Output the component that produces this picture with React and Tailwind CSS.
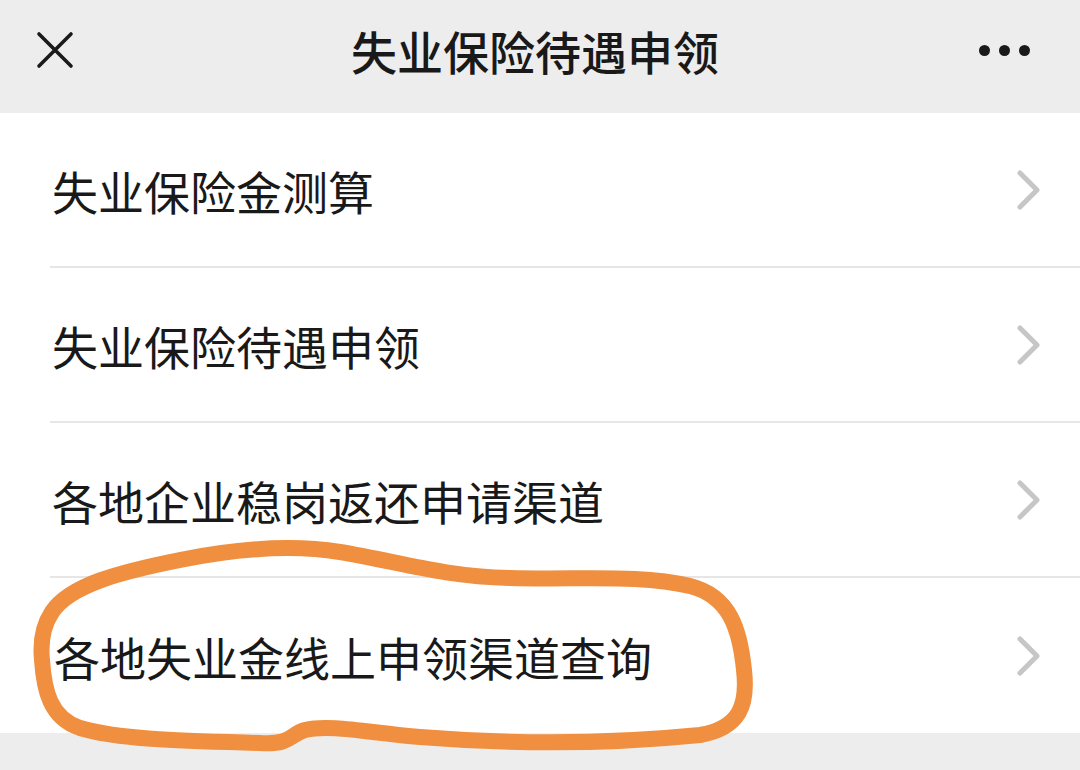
import React from 'react'

const items = [
  '失业保险金测算',
  '失业保险待遇申领',
  '各地企业稳岗返还申请渠道',
  '各地失业金线上申领渠道查询',
]

function Chevron() {
  return (
    <svg width="26" height="40" viewBox="0 0 26 40" fill="none" stroke="#c6c6c6" strokeWidth="5" strokeLinecap="round" strokeLinejoin="round">
      <path d="M4 3 L21 20 L4 37" />
    </svg>
  )
}

export default function App() {
  return (
    <div
      className="relative w-[1080px] h-[770px] overflow-hidden bg-[#ededed] text-[#191919]"
      style={{ fontFamily: '"Noto Sans CJK SC", "Noto Sans", sans-serif' }}
    >
      {/* Top bar */}
      <div className="h-[113px] pb-[13px] flex items-center px-[36px]">
        <div className="w-[120px]">
          <svg width="38" height="38" viewBox="0 0 38 38" stroke="#1a1a1a" strokeWidth="3.6" strokeLinecap="round">
            <path d="M3 3 L35 35 M35 3 L3 35" />
          </svg>
        </div>
        <div className="flex-1 text-center pr-[10px] text-[46px] leading-none font-medium">失业保险待遇申领</div>
        <div className="w-[120px] flex justify-end gap-[9px] pr-[14px]">
          <span className="w-[11px] h-[11px] rounded-full bg-[#1a1a1a]" />
          <span className="w-[11px] h-[11px] rounded-full bg-[#1a1a1a]" />
          <span className="w-[11px] h-[11px] rounded-full bg-[#1a1a1a]" />
        </div>
      </div>

      {/* List */}
      <div className="bg-white">
        {items.map((t, i) => (
          <div key={t} className="pl-[50px]">
            <div
              className={
                'h-[155px] flex items-center justify-between pr-[38px] ' +
                (i < items.length - 1 ? 'border-b-2 border-[#e6e6e6]' : '')
              }
            >
              <span className={'text-[46px] leading-none ' + (i === 3 ? 'pl-[4px]' : 'pl-[2px]')}>{t}</span>
              <Chevron />
            </div>
          </div>
        ))}
      </div>

      {/* Hand-drawn highlight */}
      <svg className="absolute left-0 top-0 pointer-events-none" width="1080" height="770" viewBox="0 0 1080 770" fill="none">
        <path
          d="M52 612 C70 585 120 572 180 560 C230 550 290 544 340 552 C400 562 440 576 510 578 C580 580 640 574 690 586 C730 596 740 630 744 670 C748 705 740 728 700 735 C620 743 520 745 420 737 C370 733 330 724 305 730 C290 734 292 745 260 743 C190 741 120 740 80 728 C50 718 44 690 42 660 C40 640 44 624 52 612 Z"
          stroke="#ef8f3f"
          strokeWidth="16"
          strokeLinecap="round"
          strokeLinejoin="round"
        />
      </svg>
    </div>
  )
}
